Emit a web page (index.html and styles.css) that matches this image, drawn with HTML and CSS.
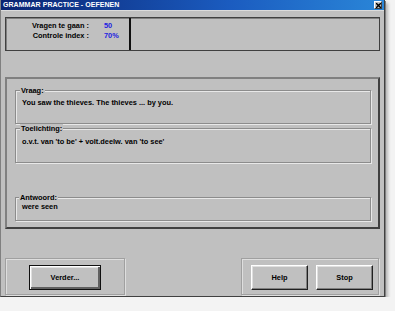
FILE: index.html
```html
<!DOCTYPE html>
<html lang="nl">
<head>
    <meta charset="UTF-8">
    <meta name="viewport" content="width=device-width, initial-scale=1.0">
    <title>Grammar Practice - Oefenen</title>
    <link rel="stylesheet" href="styles.css">
</head>
<body>
    <div class="window">
        <div class="titlebar">
            <span class="title">GRAMMAR PRACTICE - OEFENEN</span>
            <span class="close">
                <svg width="5" height="5" viewBox="0 0 5 5"><path d="M0 0L5 5M5 0L0 5" stroke="#000" stroke-width="1.4"/></svg>
            </span>
        </div>
        <div class="content">
            <div class="stats">
                <div class="stats-cell">
                    <span class="stat-label">Vragen te gaan :</span><span class="stat-value">50</span>
                    <span class="stat-label">Controle index :</span><span class="stat-value">70%</span>
                </div>
            </div>

            <div class="main">
                <div class="group group-question">
                    <span class="group-title">Vraag:</span>
                    <p class="group-text">You saw the thieves. The thieves ... by you.</p>
                </div>
                <div class="group group-hint">
                    <span class="group-title">Toelichting:</span>
                    <p class="group-text">o.v.t. van 'to be' + volt.deelw. van 'to see'</p>
                </div>
                <div class="group group-answer">
                    <span class="group-title">Antwoord:</span>
                    <p class="group-text">were seen</p>
                </div>
            </div>

            <div class="actions">
                <div class="box box-left">
                    <button class="btn btn-default btn-next">Verder...</button>
                </div>
                <div class="box box-right">
                    <button class="btn">Help</button>
                    <button class="btn">Stop</button>
                </div>
            </div>
        </div>
    </div>
</body>
</html>
```
FILE: styles.css
```css
* {
    padding: 0;
    margin: 0;
    box-sizing: border-box;
}
body {
    background-color: #f3f3f3;
    font-family: "Liberation Sans", Arial, sans-serif;
    font-size: 7.4px;
    font-weight: bold;
    color: #000;
}
.window {
    width: 385px;
    height: 297px;
    background-color: #c0c0c0;
    border-left: 1px solid #808080;
    border-right: 1px solid #404040;
    border-bottom: 1px solid #404040;
    box-shadow: 1px 1px 0 #808080, 3px 3px 3px rgba(0, 0, 0, 0.25);
}
.titlebar {
    height: 11px;
    display: flex;
    align-items: center;
    justify-content: space-between;
    padding: 0 2px 0 2px;
    background: linear-gradient(to right, #0a2472, #1b5cc0 60%, #2a86d8);
    border-bottom: 1px solid #dcdcdc;
}
.title {
    color: #fff;
    font-size: 7px;
    letter-spacing: 0.05px;
    line-height: 10px;
}
.close {
    width: 8px;
    height: 8px;
    display: flex;
    align-items: center;
    justify-content: center;
    background-color: #c0c0c0;
    border-top: 1px solid #fff;
    border-left: 1px solid #fff;
    border-right: 1px solid #404040;
    border-bottom: 1px solid #404040;
}
.content {
    padding: 6px 4px 0 4px;
}
.stats {
    height: 34px;
    border: 1px solid #404040;
    box-shadow: inset 1px 1px 0 #808080;
}
.stats-cell {
    width: 125px;
    height: 100%;
    border-right: 2px solid #101010;
    display: grid;
    grid-template-columns: 83px auto;
    column-gap: 15px;
    align-content: start;
    padding-top: 3px;
    line-height: 10px;
}
.stat-label {
    text-align: right;
}
.stat-value {
    color: #2020e0;
}
.main {
    margin-top: 26px;
    height: 152px;
    border-top: 2px solid #808080;
    border-left: 2px solid #808080;
    border-right: 2px solid #404040;
    border-bottom: 2px solid #404040;
    padding: 11px 7px 0 8px;
}
.group {
    border: 1px solid #8c8c8c;
    box-shadow: 1px 1px 0 #e8e8e8, inset 1px 1px 0 #e8e8e8;
}
.group-title {
    display: block;
    width: fit-content;
    margin: -5px 0 0 4px;
    padding: 0 1px;
    line-height: 9px;
    background-color: #c0c0c0;
}
.group-text {
    padding-left: 6px;
    line-height: 10px;
}
.group-question {
    height: 34px;
}
.group-question .group-text {
    margin-top: 3px;
}
.group-hint {
    height: 35px;
    margin-top: 4px;
}
.group-hint .group-text {
    margin-top: 4px;
}
.group-answer {
    height: 24px;
    margin-top: 34px;
}
.group-answer .group-title {
    margin-left: 3px;
}
.actions {
    margin-top: 29px;
    display: flex;
    justify-content: space-between;
}
.box {
    height: 37px;
    border: 1px solid #a0a0a0;
    box-shadow: inset 1px 1px 0 #dedede, 1px 1px 0 #dedede;
    display: flex;
    align-items: center;
}
.box-left {
    width: 120px;
    padding-left: 23px;
}
.box-right {
    width: 138px;
    margin-right: 1px;
    padding-left: 9px;
    gap: 8px;
}
.btn {
    width: 57px;
    height: 25px;
    margin-top: 1px;
    background-color: #c0c0c0;
    font-family: inherit;
    font-size: 7.4px;
    font-weight: bold;
    color: #000;
    border-top: 1px solid #fff;
    border-left: 1px solid #fff;
    border-right: 1px solid #202020;
    border-bottom: 1px solid #202020;
    box-shadow: inset -1px -1px 0 #808080, inset 1px 1px 0 #dfdfdf;
}
.btn-next {
    width: 72px;
}
.btn-default {
    border: 1px solid #101010;
    box-shadow: inset 1px 1px 0 #fff, inset -2px -2px 0 #606060, inset 2px 2px 0 #dfdfdf;
}
```
